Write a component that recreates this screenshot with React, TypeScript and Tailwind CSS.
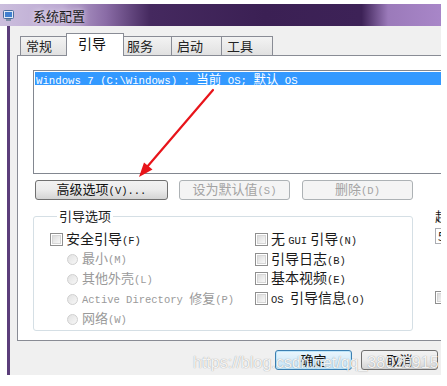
import React from "react";

const cjk = "font-['Noto_Sans_CJK_SC','Noto_Sans',sans-serif]";
const mono = "font-['Liberation_Mono','Noto_Sans_CJK_SC',monospace]";

const Tab = ({ label, width, selected }: { label: string; width: number; selected?: boolean }) =>
  selected ? (
    <div
      className="relative z-10 -mx-[2px] -mb-[1px] flex h-[23px] items-start border border-b-0 border-[#898c95] bg-white pl-[11px] pt-[1px] text-[14px] leading-[17px] text-[#111]"
      style={{ width }}
    >
      {label}
    </div>
  ) : (
    <div
      className="flex h-[19px] items-start border border-b-0 border-l-0 border-[#898c95] bg-gradient-to-b from-[#f3f3f3] to-[#e1e1e1] pl-[5px] pt-[1px] text-[13px] leading-[16px] text-[#222] first:border-l"
      style={{ width }}
    >
      {label}
    </div>
  );

const Checkbox = () => (
  <span className="mr-[3px] inline-block size-[13px] shrink-0 border border-[#8f8f8f] bg-white p-[1px]">
    <span className="block size-full border border-[#d6d6d6] bg-gradient-to-br from-[#dcdcdc] to-[#f8f8f8]" />
  </span>
);

const Radio = () => (
  <span className="mr-[4px] inline-block size-[11px] shrink-0 rounded-full border border-[#d0d0d0] bg-gradient-to-br from-[#e2e2e2] to-[#f7f7f7]" />
);

const Paren = ({ children }: { children: React.ReactNode }) => (
  <span className={`${mono} text-[10.5px]`}>{children}</span>
);

const WinButton = ({
  children,
  width,
  disabled,
  focused,
}: {
  children: React.ReactNode;
  width: number;
  disabled?: boolean;
  focused?: boolean;
}) => (
  <div
    className={`flex h-[20px] items-center justify-center rounded-[3px] border text-[13px] ${
      disabled
        ? "border-[#adb2b5] bg-[#f4f4f4] text-[#a3a3a3]"
        : focused
          ? "border-[#3c7fb1] bg-gradient-to-b from-[#eaf6fd] to-[#c4e3f6] text-[#111] shadow-[inset_0_0_0_1px_#bfe6fa]"
          : "border-[#707070] bg-gradient-to-b from-[#f2f2f2] via-[#ebebeb] to-[#d4d4d4] text-[#111]"
    }`}
    style={{ width }}
  >
    <span className="leading-[16px]">{children}</span>
  </div>
);

const Row = ({ children, box, indent, gray, h = "h-[20px]" }: { children: React.ReactNode; box: "check" | "radio"; indent?: boolean; gray?: boolean; h?: string }) => (
  <div className={`flex ${h} items-center ${indent ? "pl-[17px]" : ""} ${gray ? "text-[#9a9a9a]" : ""}`}>
    {box === "check" ? <Checkbox /> : <Radio />}
    <span className="whitespace-pre leading-[16px]">{children}</span>
  </div>
);

export default function App() {
  return (
    <div className={`relative h-[386px] w-[447px] overflow-hidden bg-white ${cjk}`}>
      <div className="mt-[4px] flex h-[371px] w-[441px] flex-col">
        {/* title bar */}
        <div className="flex h-[22px] items-center bg-[linear-gradient(to_right,#cbbedd_0%,#bca9d2_14%,#8a6ca6_24%,#45295f_34%,#3b2054_60%,#3d2257_82%,#9b7aba_88%,#a886c8_100%)]">
          <svg width="11" height="11" viewBox="0 0 11 11" className="ml-[3px]">
            <rect x="0.5" y="0.5" width="10" height="8" rx="1" fill="#dfe9f5" stroke="#4a6d9c" />
            <rect x="2" y="2" width="7" height="5" fill="#3f7fd0" />
            <rect x="3" y="9" width="5" height="2" fill="#7d8ea6" />
          </svg>
          <span className="ml-[19px] text-[13px] leading-none text-[#1b1b1b] [text-shadow:0_0_6px_rgba(255,255,255,0.9)]">
            系统配置
          </span>
        </div>

        {/* body */}
        <div className="flex flex-1">
          <div className="w-[7px] bg-white" />
          <div className="w-[3px] bg-[#5b3d7a]" />
          <div className="flex flex-1 flex-col overflow-hidden bg-[#f0f0f0]">
            {/* tabs */}
            <div className="ml-[10px] mt-[7px] flex h-[22px] items-end">
              <Tab label="常规" width={48} />
              <Tab label="引导" width={58} selected />
              <Tab label="服务" width={50} />
              <Tab label="启动" width={50} />
              <Tab label="工具" width={51} />
            </div>

            {/* panel */}
            <div className="ml-[7px] h-[286px] w-[440px] shrink-0 border border-r-0 border-[#898c95] bg-white pl-[15px] pt-[14px]">
              <div className="h-[104px] w-[420px] border border-[#828790] bg-white p-[1px]">
                <div className={`h-[13px] whitespace-pre bg-[#3399ff] pl-[1px] text-white ${mono} text-[10.7px] leading-[13px]`}>
                  {"Windows 7 (C:\\Windows) : "}
                  <span className={`${cjk} text-[12.5px]`}>当前</span>
                  {" OS; "}
                  <span className={`${cjk} text-[12.5px]`}>默认</span>
                  {" OS"}
                </div>
              </div>

              <div className="mt-[6px] flex">
                <div className="ml-[2px]">
                  <WinButton width={133}>
                    高级选项<Paren>(V)...</Paren>
                  </WinButton>
                </div>
                <div className="ml-[11px]">
                  <WinButton width={111} disabled>
                    设为默认值<Paren>(S)</Paren>
                  </WinButton>
                </div>
                <div className="ml-[12px]">
                  <WinButton width={111} disabled>
                    删除<Paren>(D)</Paren>
                  </WinButton>
                </div>
              </div>

              <div className="mt-[8px] flex">
                <fieldset className="h-[123px] w-[380px] shrink-0 rounded-[3px] border border-[#d5dfe5] pl-[16px]">
                  <legend className="ml-[7px] px-[2px] text-[13px] leading-[16px] text-[#222]">引导选项</legend>
                  <div className="flex">
                    <div className="w-[205px] pt-[5px] text-[13px] text-[#1a1a1a]">
                      <Row box="check">
                        <span className="text-[14px]">安全引导</span>
                        <Paren>(F)</Paren>
                      </Row>
                      <Row box="radio" indent gray>
                        最小<Paren>(M)</Paren>
                      </Row>
                      <Row box="radio" indent gray>
                        其他外壳<Paren>(L)</Paren>
                      </Row>
                      <Row box="radio" indent gray>
                        <span className={`${mono} text-[10.5px]`}>Active Directory </span>
                        修复<Paren>(P)</Paren>
                      </Row>
                      <Row box="radio" indent gray>
                        网络<Paren>(W)</Paren>
                      </Row>
                    </div>
                    <div className="pt-[6px] text-[14px] text-[#1a1a1a]">
                      <Row box="check" h="h-[19.5px]">
                        无 <span className={`${mono} text-[10.5px]`}>GUI</span> 引导<Paren>(N)</Paren>
                      </Row>
                      <Row box="check" h="h-[19.5px]">
                        引导日志<Paren>(B)</Paren>
                      </Row>
                      <Row box="check" h="h-[19.5px]">
                        基本视频<Paren>(E)</Paren>
                      </Row>
                      <Row box="check" h="h-[19.5px]">
                        <span className={`${mono} text-[10.5px]`}>OS </span>
                        引导信息<Paren>(O)</Paren>
                      </Row>
                    </div>
                  </div>
                </fieldset>

                <div className="ml-[22px] flex shrink-0 flex-col pt-[1px] text-[13px] text-[#1a1a1a]">
                  <span className="leading-[14px]">超时</span>
                  <div className="mt-[5px] flex h-[16px] w-[60px] items-center border border-[#abadb3] bg-white pl-[2px] text-[12px]">
                    5
                  </div>
                  <div className="mt-[45px]">
                    <Checkbox />
                  </div>
                </div>
              </div>
            </div>

            {/* bottom buttons */}
            <div className="flex justify-end gap-[9px] pr-[3px] pt-[9px]">
              <WinButton width={77} focused>
                确定
              </WinButton>
              <WinButton width={77}>取消</WinButton>
            </div>
          </div>
        </div>
      </div>

      {/* red arrow annotation */}
      <svg className="pointer-events-none absolute left-0 top-0" width="447" height="386">
        <line x1="213" y1="90" x2="147" y2="167" stroke="#e8141a" strokeWidth="2.2" strokeLinecap="round" />
        <polygon points="139,177 152.5,169.5 144,162.5" fill="#e8141a" />
      </svg>

      {/* watermark */}
      <div className="pointer-events-none absolute left-[193px] top-[353px] font-['Liberation_Sans',Arial,sans-serif] text-[16px] leading-[20px] text-white/90 [text-shadow:0_0_1px_rgba(0,0,0,0.45)]">
        https://blog.csdn.net/qq_38020915
      </div>
    </div>
  );
}
